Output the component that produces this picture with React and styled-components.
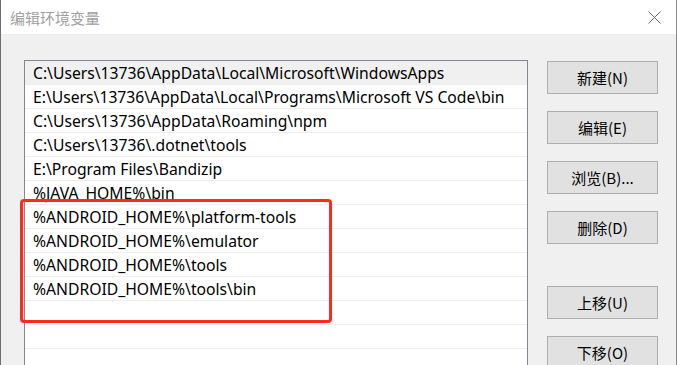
import React from 'react'
import styled, { createGlobalStyle } from 'styled-components'

const GlobalStyle = createGlobalStyle`
    html, body {
        margin: 0;
        padding: 0;
        background: #f0f0f0;
        overflow: hidden;
    }
    body {
        font-family: "Noto Sans", "Noto Sans CJK SC", sans-serif;
    }
`

const paths = [
    'C:\\Users\\13736\\AppData\\Local\\Microsoft\\WindowsApps',
    'E:\\Users\\13736\\AppData\\Local\\Programs\\Microsoft VS Code\\bin',
    'C:\\Users\\13736\\AppData\\Roaming\\npm',
    'C:\\Users\\13736\\.dotnet\\tools',
    'E:\\Program Files\\Bandizip',
    '%JAVA_HOME%\\bin',
    '%ANDROID_HOME%\\platform-tools',
    '%ANDROID_HOME%\\emulator',
    '%ANDROID_HOME%\\tools',
    '%ANDROID_HOME%\\tools\\bin',
    '',
    '',
    '',
]

const buttons = [
    { label: '新建(N)' },
    { label: '编辑(E)' },
    { label: '浏览(B)...' },
    { label: '删除(D)' },
    { label: '上移(U)', spaced: true },
    { label: '下移(O)' },
]

function App() {
    return <Window>
        <GlobalStyle />
        <TitleBar>
            <Title>编辑环境变量</Title>
            <CloseButton aria-label="close">
                <svg width="13" height="13" viewBox="0 0 13 13">
                    <path d="M0.5 0.5 L12.5 12.5 M12.5 0.5 L0.5 12.5" stroke="#6b6b6b" strokeWidth="1" fill="none" />
                </svg>
            </CloseButton>
        </TitleBar>
        <Body>
            <PathList>
                {paths.map((p, i) => (
                    <PathRow key={i} selected={i === 0}>{p}</PathRow>
                ))}
                <Highlight />
            </PathList>
            <ButtonColumn>
                {buttons.map(b => (
                    <ActionButton key={b.label} spaced={b.spaced}>{b.label}</ActionButton>
                ))}
            </ButtonColumn>
        </Body>
    </Window>
}


const Window = styled.div`
    width: 677px;
    height: 365px;
    box-sizing: border-box;
    border-left: 1px solid #6d6d6d;
    border-right: 1px solid #8a8a8a;
    background: #f0f0f0;
    display: flex;
    flex-direction: column;
    overflow: hidden;
`


const TitleBar = styled.header`
    height: 35px;
    flex-shrink: 0;
    background: #fff;
    display: flex;
    align-items: center;
    justify-content: space-between;
    padding: 0 15px 0 9px;
    border-bottom: 1px solid #ececec;
    box-sizing: border-box;
`


const Title = styled.span`
    font-family: "Noto Sans CJK SC", sans-serif;
    font-size: 15px;
    color: #a0a0a0;
`


const CloseButton = styled.span`
    display: flex;
`


const Body = styled.div`
    flex: 1;
    display: flex;
    align-items: flex-start;
    padding: 25px 0 0 23px;
    gap: 19px;
`


const PathList = styled.div`
    position: relative;
    width: 504px;
    box-sizing: border-box;
    border: 1px solid #828790;
    background: #fff;
`


const PathRow = styled.div`
    height: 24px;
    box-sizing: border-box;
    border-bottom: 1px solid #ededed;
    padding: 2px 0 0 8px;
    line-height: 21px;
    font-size: 15.7px;
    color: #000;
    white-space: nowrap;
    background: ${p => p.selected ? '#f0f0f0' : '#fff'};
`


const Highlight = styled.div`
    position: absolute;
    left: -5px;
    top: 138px;
    width: 312px;
    height: 124px;
    box-sizing: border-box;
    border: 3px solid #ff2a1e;
    border-radius: 4px;
    pointer-events: none;
`


const ButtonColumn = styled.div`
    display: flex;
    flex-direction: column;
    gap: 17px;
    padding-top: 1px;
`


const ActionButton = styled.button`
    width: 111px;
    height: 33px;
    box-sizing: border-box;
    background: #e1e1e1;
    border: 1px solid #adadad;
    border-radius: 0;
    font-family: "Noto Sans CJK SC", sans-serif;
    font-size: 15px;
    color: #000;
    padding: 0;
    margin-top: ${p => p.spaced ? '25px' : '0'};
`


export default App
